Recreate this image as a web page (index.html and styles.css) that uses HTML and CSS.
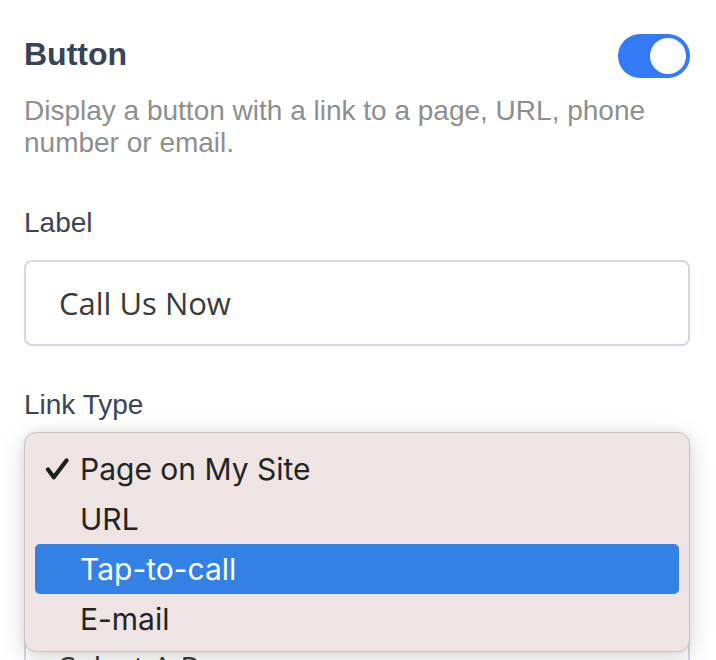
FILE: index.html
```html
<!DOCTYPE html>
<html lang="en">
<head>
<meta charset="utf-8">
<title>Button settings</title>
<link rel="stylesheet" href="styles.css">
</head>
<body>
<div class="panel">
  <div class="header">
    <h1 class="title">Button</h1>
    <div class="toggle"><span class="knob"></span></div>
  </div>
  <p class="desc">Display a button with a link to a page, URL, phone number or email.</p>

  <div class="field-label">Label</div>
  <div class="input"><span class="value">Call Us Now</span></div>

  <div class="field-label label-gap">Link Type</div>
  <div class="select-wrap">
    <div class="input"></div>
    <div class="input page-select"><span class="value">Select A Page</span></div>

    <div class="menu">
      <div class="item">
        <svg class="check" width="24" height="22" viewBox="0 0 24 22"><path d="M3 11.5 L8.8 19.2 L21.5 2.5" fill="none" stroke="#1f1f1f" stroke-width="4.2" stroke-linecap="round" stroke-linejoin="round"/></svg>
        <span>Page on My Site</span>
      </div>
      <div class="item"><span>URL</span></div>
      <div class="item active"><span>Tap-to-call</span></div>
      <div class="item"><span>E-mail</span></div>
    </div>
  </div>
</div>
</body>
</html>
```

FILE: styles.css
```css
html, body {
  margin: 0;
  padding: 0;
  background: #ffffff;
  overflow: hidden;
}

body {
  width: 716px;
  height: 660px;
  font-family: "Liberation Sans", Arial, sans-serif;
}

.panel {
  width: 666px;
  padding: 32px 26px 0 24px;
}

.header {
  display: flex;
  justify-content: space-between;
  align-items: flex-start;
  height: 46px;
}

.title {
  margin: 0;
  font-size: 32px;
  line-height: 44px;
  font-weight: 700;
  color: #384357;
}

.toggle {
  width: 72px;
  height: 44px;
  margin-top: 2px;
  box-sizing: border-box;
  padding: 4px;
  border-radius: 22px;
  background: #3479f6;
  display: flex;
  justify-content: flex-end;
}

.knob {
  width: 36px;
  height: 36px;
  border-radius: 50%;
  background: #ffffff;
}

.desc {
  margin: 17px 0 0;
  font-size: 28px;
  line-height: 32px;
  color: #8e8e8e;
}

.field-label {
  margin-top: 48px;
  font-size: 28px;
  line-height: 32px;
  color: #3b4458;
}

.label-gap {
  margin-top: 43px;
}

.input {
  margin-top: 21px;
  height: 86px;
  box-sizing: border-box;
  border: 2px solid #d3d9e2;
  border-radius: 8px;
  display: flex;
  align-items: center;
  padding-left: 33px;
  background: #fff;
}

.value {
  font-family: "Open Sans", "Noto Sans", sans-serif;
  font-size: 31px;
  color: #3a3a3a;
}

.select-wrap {
  position: relative;
}

.page-select {
  margin-top: 96px;
}

.menu {
  position: absolute;
  left: 0;
  top: -10px;
  width: 666px;
  height: 220px;
  box-sizing: border-box;
  padding: 11px 10px 9px;
  background: #ede4e3;
  border: 1px solid #c6c3c3;
  border-radius: 12px;
  box-shadow: 0 6px 26px rgba(0, 0, 0, 0.16), 0 0 8px rgba(0, 0, 0, 0.06);
}

.item {
  position: relative;
  height: 50px;
  border-radius: 5px;
  display: flex;
  align-items: center;
  padding-left: 45px;
  font-family: Inter, "Noto Sans", sans-serif;
  font-size: 30px;
  color: #242424;
}

.item.active {
  background: #3381e4;
  color: #ffffff;
}

.check {
  position: absolute;
  left: 10px;
  top: 14px;
}
```
